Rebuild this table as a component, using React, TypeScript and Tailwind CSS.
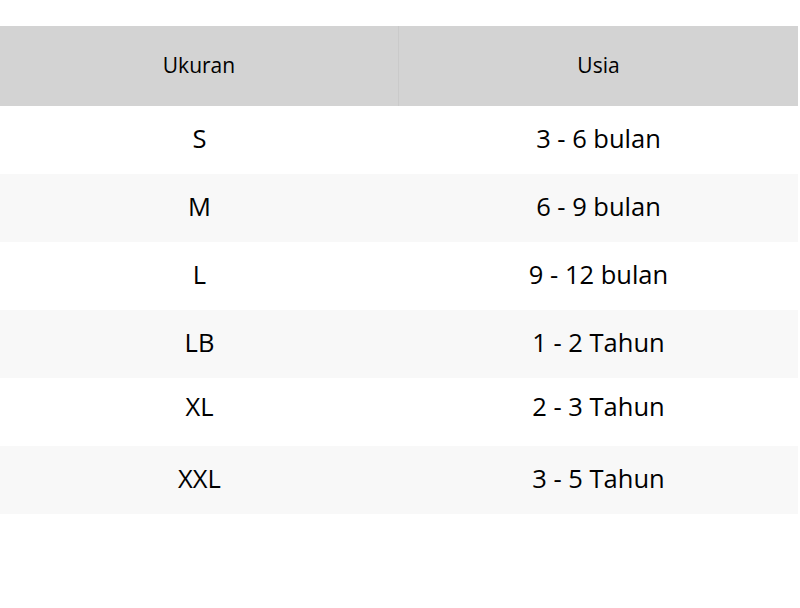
import React from "react";

const rows: [string, string, string][] = [
  ["S", "3 - 6 bulan", "pb-[4px]"],
  ["M", "6 - 9 bulan", "pb-[4px]"],
  ["L", "9 - 12 bulan", "pb-[4px]"],
  ["LB", "1 - 2 Tahun", "pb-[4px]"],
  ["XL", "2 - 3 Tahun", "pb-[12px]"],
  ["XXL", "3 - 5 Tahun", "pb-[4px]"],
];

export default function App() {
  return (
    <div className="w-[800px] h-[608px] bg-white pt-[26px] text-black" style={{ fontFamily: '"Open Sans", sans-serif' }}>
      <div className="w-[798px]">
        <div className="grid grid-cols-2 h-[80px] bg-[#d3d3d3] text-[21px]">
          <div className="flex items-center justify-center border-r border-[#cacaca]">Ukuran</div>
          <div className="flex items-center justify-center">Usia</div>
        </div>
        {rows.map(([a, b, pb], i) => (
          <div key={a} className={`grid grid-cols-2 h-[68px] text-[25.5px] ${pb} ${i % 2 === 1 ? "bg-[#f8f8f8]" : "bg-white"}`}>
            <div className="flex items-center justify-center">{a}</div>
            <div className="flex items-center justify-center">{b}</div>
          </div>
        ))}
      </div>
    </div>
  );
}
